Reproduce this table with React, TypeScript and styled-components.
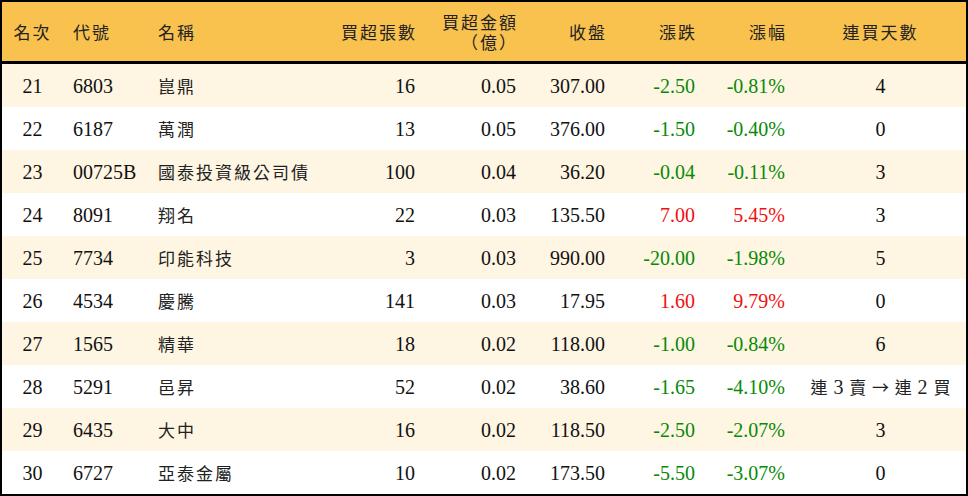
import React from "react";
import styled, { createGlobalStyle } from "styled-components";

const GlobalStyle = createGlobalStyle`
  html, body {
    margin: 0;
    padding: 0;
    background: #fff;
  }
  body {
    font-family: "Liberation Serif", "Noto Sans CJK TC", serif;
    color: #111;
  }
`;

const COLS = "61px 85px 177px 100px 101px 89px 90px 90px 1fr";

const Table = styled.div`
  width: 968px;
  height: 496px;
  box-sizing: border-box;
  border: 2px solid #000;
  display: flex;
  flex-direction: column;
`;

const HeaderRow = styled.div`
  display: grid;
  grid-template-columns: ${COLS};
  height: 59px;
  background: #f9c24f;
  border-bottom: 3px solid #000;
  align-items: center;
`;

const HeadCell = styled.div<{ $align: string }>`
  font-family: "Noto Sans CJK TC", sans-serif;
  font-size: 17px;
  letter-spacing: 2px;
  line-height: 20px;
  text-align: ${(p) => p.$align};
  padding: ${(p) =>
    p.$align === "right" ? "0 8px 0 0" : p.$align === "left" ? "0 0 0 10px" : "0"};
  color: #222;
`;

const Row = styled.div<{ $odd: boolean }>`
  display: grid;
  grid-template-columns: ${COLS};
  height: 43px;
  align-items: center;
  background: ${(p) => (p.$odd ? "#fef5e2" : "#fff")};
`;

const Cell = styled.div<{ $align: string; $color?: string }>`
  font-size: 20px;
  line-height: 24px;
  text-align: ${(p) => p.$align};
  color: ${(p) => p.$color || "#111"};
  padding: ${(p) =>
    p.$align === "right" ? "0 10px 0 0" : p.$align === "left" ? "0 0 0 10px" : "0"};
  white-space: nowrap;
`;

const CjkText = styled.span`
  font-family: "Noto Sans CJK TC", sans-serif;
  font-size: 17px;
  letter-spacing: 2px;
  color: #222;
`;

const Streak = styled.span`
  font-family: "Noto Sans CJK TC", sans-serif;
  font-size: 17px;
  color: #222;
  word-spacing: 2px;
`;

const Num = styled.span`
  font-family: "Liberation Serif", serif;
  font-size: 20px;
`;

type Stock = {
  rank: number;
  code: string;
  name: string;
  qty: number;
  amount: string;
  close: string;
  change: string;
  pct: string;
  days: string;
  sold?: number;
};

const data: Stock[] = [
  { rank: 21, code: "6803", name: "崑鼎", qty: 16, amount: "0.05", close: "307.00", change: "-2.50", pct: "-0.81%", days: "4" },
  { rank: 22, code: "6187", name: "萬潤", qty: 13, amount: "0.05", close: "376.00", change: "-1.50", pct: "-0.40%", days: "0" },
  { rank: 23, code: "00725B", name: "國泰投資級公司債", qty: 100, amount: "0.04", close: "36.20", change: "-0.04", pct: "-0.11%", days: "3" },
  { rank: 24, code: "8091", name: "翔名", qty: 22, amount: "0.03", close: "135.50", change: "7.00", pct: "5.45%", days: "3" },
  { rank: 25, code: "7734", name: "印能科技", qty: 3, amount: "0.03", close: "990.00", change: "-20.00", pct: "-1.98%", days: "5" },
  { rank: 26, code: "4534", name: "慶騰", qty: 141, amount: "0.03", close: "17.95", change: "1.60", pct: "9.79%", days: "0" },
  { rank: 27, code: "1565", name: "精華", qty: 18, amount: "0.02", close: "118.00", change: "-1.00", pct: "-0.84%", days: "6" },
  { rank: 28, code: "5291", name: "邑昇", qty: 52, amount: "0.02", close: "38.60", change: "-1.65", pct: "-4.10%", days: "2", sold: 3 },
  { rank: 29, code: "6435", name: "大中", qty: 16, amount: "0.02", close: "118.50", change: "-2.50", pct: "-2.07%", days: "3" },
  { rank: 30, code: "6727", name: "亞泰金屬", qty: 10, amount: "0.02", close: "173.50", change: "-5.50", pct: "-3.07%", days: "0" },
];

const GREEN = "#078a07";
const RED = "#f01010";

const App = () => {
  return (
    <>
      <GlobalStyle />
      <Table>
        <HeaderRow>
          <HeadCell $align="center">名次</HeadCell>
          <HeadCell $align="left">代號</HeadCell>
          <HeadCell $align="left">名稱</HeadCell>
          <HeadCell $align="right">買超張數</HeadCell>
          <HeadCell $align="right">
            買超金額
            <br />
            （億）
          </HeadCell>
          <HeadCell $align="right">收盤</HeadCell>
          <HeadCell $align="right">漲跌</HeadCell>
          <HeadCell $align="right">漲幅</HeadCell>
          <HeadCell $align="center">連買天數</HeadCell>
        </HeaderRow>
        {data.map((s, i) => {
          const color = s.change.startsWith("-") ? GREEN : RED;
          return (
            <Row key={s.rank} $odd={i % 2 === 0}>
              <Cell $align="center">{s.rank}</Cell>
              <Cell $align="left">{s.code}</Cell>
              <Cell $align="left">
                <CjkText>{s.name}</CjkText>
              </Cell>
              <Cell $align="right">{s.qty}</Cell>
              <Cell $align="right">{s.amount}</Cell>
              <Cell $align="right">{s.close}</Cell>
              <Cell $align="right" $color={color}>
                {s.change}
              </Cell>
              <Cell $align="right" $color={color}>
                {s.pct}
              </Cell>
              <Cell $align="center">
                {s.sold ? (
                  <Streak>
                    連 <Num>{s.sold}</Num> 賣 → 連 <Num>{s.days}</Num> 買
                  </Streak>
                ) : (
                  s.days
                )}
              </Cell>
            </Row>
          );
        })}
      </Table>
    </>
  );
};

export default App;
